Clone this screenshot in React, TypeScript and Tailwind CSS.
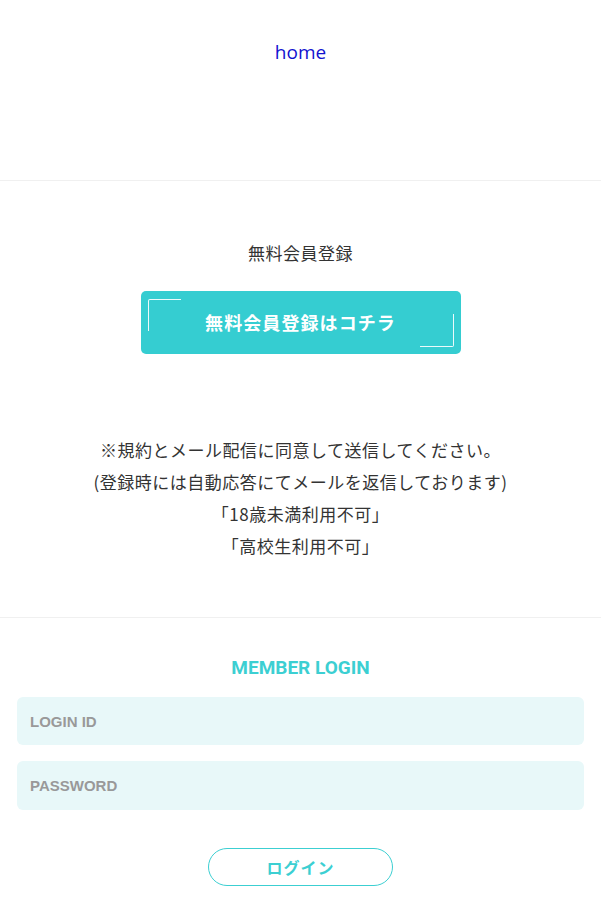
import React from "react"

const jp = "font-['Noto_Sans_CJK_JP','Noto_Sans',sans-serif]"

function CornerButton() {
  return (
    <button
      type="button"
      className="relative mx-auto flex h-[63px] w-[320px] items-center justify-center rounded-[5px] bg-[#35cdd1] text-white"
    >
      {/* bracket top-left */}
      <span className="absolute left-[7px] top-[8px] h-[32px] w-[33px] rounded-tl-[2px] border-l-[1.5px] border-t-[1.5px] border-white/90" />
      {/* bracket bottom-right */}
      <span className="absolute bottom-[7px] right-[7px] h-[33px] w-[34px] rounded-br-[2px] border-b-[1.5px] border-r-[1.5px] border-white/90" />
      <span className={`${jp} text-[18px] font-bold tracking-[0.06em]`}>無料会員登録はコチラ</span>
    </button>
  )
}

export default function App() {
  return (
    <div className={`min-h-[916px] w-full bg-white ${jp} text-[#333]`}>
      <header className="h-[181px] border-b border-[#f0f0f0] pt-[38px] text-center">
        <a href="#" className="font-['Open_Sans',sans-serif] text-[19px] leading-[28px] text-[#1212d0]">
          home
        </a>
      </header>

      <section className="border-b border-[#f0f0f0] pb-[55px] pt-[60px] text-center">
        <p className="text-[17px] leading-[24px] tracking-[0.03em] text-[#333]">無料会員登録</p>
        <div className="mt-[26px]">
          <CornerButton />
        </div>
        <div className="mt-[80px] text-[17px] leading-[32px] tracking-[0.03em] text-[#333]">
          <p>※規約とメール配信に同意して送信してください。</p>
          <p>(登録時には自動応答にてメールを返信しております)</p>
          <p>「18歳未満利用不可」</p>
          <p>「高校生利用不可」</p>
        </div>
      </section>

      <section className="px-[17px] pb-[30px] pt-[38px]">
        <h2 className="text-center font-['Roboto',sans-serif] text-[19px] font-bold leading-[24px] text-[#3ccfd2]">
          MEMBER LOGIN
        </h2>
        <form className="mt-[17px] flex flex-col gap-[16px]" onSubmit={(e) => e.preventDefault()}>
          <input
            type="text"
            placeholder="LOGIN ID"
            className="h-[48px] w-full rounded-[6px] bg-[#e8f8f9] px-[13px] font-['Liberation_Sans',sans-serif] text-[15px] font-bold text-[#555] outline-none placeholder:text-[#999]"
          />
          <input
            type="password"
            placeholder="PASSWORD"
            className="h-[49px] w-full rounded-[6px] bg-[#e8f8f9] px-[13px] font-['Liberation_Sans',sans-serif] text-[15px] font-bold text-[#555] outline-none placeholder:text-[#999]"
          />
          <button
            type="submit"
            className="mx-auto mt-[22px] h-[38px] w-[185px] rounded-full border border-[#3ccfd2] bg-white text-[16px] font-bold tracking-[0.06em] text-[#3ccfd2]"
          >
            ログイン
          </button>
        </form>
      </section>
    </div>
  )
}
